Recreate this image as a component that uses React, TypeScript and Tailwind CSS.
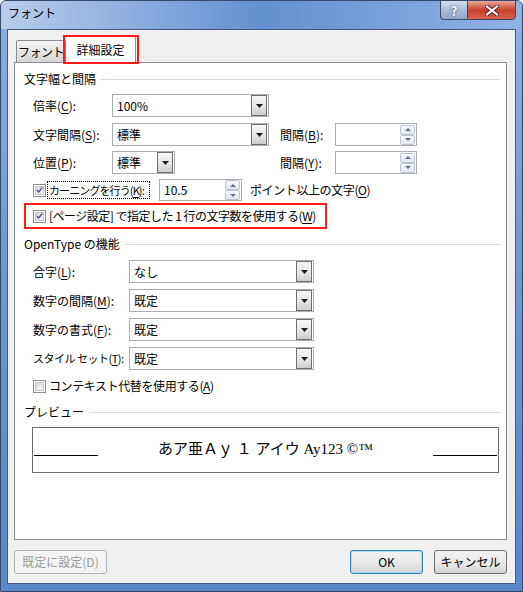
import React from "react";

const ui = "font-['Noto_Sans_CJK_JP','Noto_Sans',sans-serif]";

function Key({ c }: { c: string }) {
    return <span className="underline underline-offset-[2px]">{c}</span>;
}

function Arrow() {
    return (
        <svg width="7" height="4" viewBox="0 0 7 4">
            <path d="M0 0h7L3.5 4z" fill="#1c1c1c" />
        </svg>
    );
}

function Combo({ value, className }: { value: string; className: string }) {
    return (
        <div className={"flex h-[23px] shrink-0 items-center border border-[#abadb3] bg-white " + className}>
            <span className="whitespace-nowrap pl-[4px] text-[12px] leading-none">{value}</span>
            <div className="ml-auto mr-px flex h-[21px] w-[16px] items-center justify-center border border-[#707070] bg-gradient-to-b from-[#f6f6f6] via-[#e8e8e8] to-[#cdcdcd]">
                <Arrow />
            </div>
        </div>
    );
}

function SpinBtn({ up }: { up?: boolean }) {
    return (
        <div className="flex h-[10px] w-[15px] items-center justify-center rounded-[2px] border border-[#b9c3d1] bg-gradient-to-b from-[#f7f9fb] to-[#e2e8ef]">
            <svg width="6" height="3" viewBox="0 0 6 3">
                <path d={up ? "M0 3h6L3 0z" : "M0 0h6L3 3z"} fill="#5a6d96" />
            </svg>
        </div>
    );
}

function Spin({ value, className }: { value?: string; className: string }) {
    return (
        <div className={"flex shrink-0 items-center border border-[#abadb3] bg-white " + className}>
            <span className="pl-[4px] text-[12px] leading-none">{value}</span>
            <div className="ml-auto mr-px flex flex-col">
                <SpinBtn up />
                <SpinBtn />
            </div>
        </div>
    );
}

function Check({ checked }: { checked?: boolean }) {
    return (
        <div className="flex h-[13px] w-[13px] shrink-0 items-center justify-center border border-[#8e8f8f] bg-white p-px">
            <div className="flex h-full w-full items-center justify-center border border-[#c6c6c6] bg-gradient-to-br from-[#d8d8d8] to-[#f8f8f8]">
                {checked && (
                    <svg width="9" height="8" viewBox="0 0 9 8">
                        <path d="M1 4l2.5 2.5L8 1" stroke="#3d5391" strokeWidth="1.8" fill="none" />
                    </svg>
                )}
            </div>
        </div>
    );
}

function Header({ title }: { title: string }) {
    return (
        <div className="flex h-[16px] items-center pl-[9px] pr-[6px]">
            <span className="whitespace-nowrap text-[12px] leading-none">{title}</span>
            <div className="ml-[5px] h-px flex-1 bg-[#d5dfe5]" />
        </div>
    );
}

export default function App() {
    return (
        <div className={"flex h-[592px] w-[523px] flex-col overflow-hidden rounded-t-[6px] border border-[#34496a] bg-gradient-to-b from-[#8db0e2] via-[#6b96d2] to-[#5a87c8] text-black " + ui}>
            {/* Title bar */}
            <div className="flex h-[28px] shrink-0 items-start justify-between bg-gradient-to-r from-[#b7cdec] via-[#6390d0] to-[#90b3e3] pl-[7px] pr-[6px]">
                <span className="pt-[6px] text-[12px] leading-none">フォント</span>
                <div className="-mt-px flex h-[20px]">
                    <div className="flex w-[27px] items-center justify-center rounded-bl-[4px] border border-r-0 border-[#3b4a61] bg-gradient-to-b from-[#d3deed] via-[#a9bcd8] to-[#8ea6c9] text-[13px] font-bold leading-none text-white [text-shadow:0_0_2px_#28364d]">
                        ?
                    </div>
                    <div className="flex w-[49px] items-center justify-center rounded-br-[4px] border border-[#3b4a61] bg-gradient-to-b from-[#e9a898] via-[#c7402d] to-[#d7604a]">
                        <svg width="14" height="11" viewBox="0 0 14 11">
                            <path d="M2 1.5L12 9.5M12 1.5L2 9.5" stroke="#5a1a12" strokeWidth="4" strokeLinecap="square" />
                            <path d="M2 1.5L12 9.5M12 1.5L2 9.5" stroke="#ffffff" strokeWidth="2.2" strokeLinecap="square" />
                        </svg>
                    </div>
                </div>
            </div>

            {/* Client area */}
            <div className="mx-[6px] flex h-[555px] shrink-0 flex-col border border-[#3f5a84] bg-[#f0f0f0]">
                {/* Tabs */}
                <div className="flex h-[32px] shrink-0 items-end pl-[8px]">
                    <div className="flex h-[22px] w-[50px] items-center justify-center whitespace-nowrap rounded-t-[2px] border border-b-0 border-[#898c95] bg-gradient-to-b from-[#f3f3f3] to-[#d6d6d6] text-[12px] leading-none tracking-[-0.5px]">
                        フォント
                    </div>
                    <div className="relative z-10 -mb-px flex h-[27px] w-[70px] items-center justify-center whitespace-nowrap rounded-t-[2px] border border-b-0 border-l-0 border-[#898c95] bg-white text-[12px] leading-none">
                        詳細設定
                        <div className="absolute -left-[3px] -top-[2px] h-[29px] w-[76px] border-2 border-[#ff1a1a]" />
                    </div>
                </div>

                {/* Panel */}
                <div className="ml-[6px] mr-[8px] flex h-[478px] shrink-0 flex-col whitespace-nowrap border border-[#898c95] bg-white text-[12px] leading-none">
                    <div className="mt-[8px]">
                        <Header title="文字幅と間隔" />
                    </div>

                    <div className="mt-[7px] flex h-[23px] items-center pl-[18px]">
                        <span className="w-[79px] shrink-0">倍率(<Key c="C" />):</span>
                        <Combo value="100%" className="w-[157px]" />
                    </div>

                    <div className="mt-[6px] flex h-[23px] items-center pl-[18px]">
                        <span className="w-[79px] shrink-0">文字間隔(<Key c="S" />):</span>
                        <Combo value="標準" className="w-[157px]" />
                        <span className="ml-[11px] w-[55px] shrink-0">間隔(<Key c="B" />):</span>
                        <Spin className="h-[23px] w-[82px]" />
                    </div>

                    <div className="mt-[5px] flex h-[23px] items-center pl-[18px]">
                        <span className="w-[79px] shrink-0">位置(<Key c="P" />):</span>
                        <Combo value="標準" className="w-[63px]" />
                        <span className="ml-[105px] w-[55px] shrink-0">間隔(<Key c="Y" />):</span>
                        <Spin className="h-[23px] w-[82px]" />
                    </div>

                    <div className="mt-[5px] flex h-[22px] items-center pl-[18px]">
                        <Check checked />
                        <span className="ml-[1px] flex h-[18px] w-[103px] shrink-0 items-center overflow-hidden border border-dotted border-black pl-[1px] text-[11px] tracking-[-0.9px]">
                            カーニングを行う(<Key c="K" />):
                        </span>
                        <Spin value="10.5" className="ml-[9px] h-[22px] w-[83px]" />
                        <span className="ml-[8px] tracking-[-0.4px]">ポイント以上の文字(<Key c="O" />)</span>
                    </div>

                    <div className="ml-[9px] mt-[2px] flex h-[26px] w-[303px] items-center border-2 border-[#ff1a1a] pl-[7px]">
                        <Check checked />
                        <span className="ml-[3px] tracking-[-0.5px]">[ページ設定] で指定した 1 行の文字数を使用する(<Key c="W" />)</span>
                    </div>

                    <div className="mt-[7px]">
                        <Header title="OpenType の機能" />
                    </div>

                    <div className="mt-[8px] flex h-[23px] items-center pl-[18px]">
                        <span className="w-[96px] shrink-0">合字(<Key c="L" />):</span>
                        <Combo value="なし" className="w-[185px]" />
                    </div>
                    <div className="mt-[6px] flex h-[23px] items-center pl-[18px]">
                        <span className="w-[96px] shrink-0">数字の間隔(<Key c="M" />):</span>
                        <Combo value="既定" className="w-[185px]" />
                    </div>
                    <div className="mt-[6px] flex h-[23px] items-center pl-[18px]">
                        <span className="w-[96px] shrink-0">数字の書式(<Key c="F" />):</span>
                        <Combo value="既定" className="w-[185px]" />
                    </div>
                    <div className="mt-[6px] flex h-[23px] items-center pl-[18px]">
                        <span className="w-[96px] shrink-0 text-[11px] tracking-[-0.5px]">スタイル セット(<Key c="T" />):</span>
                        <Combo value="既定" className="w-[185px]" />
                    </div>

                    <div className="mt-[8px] flex h-[16px] items-center pl-[18px]">
                        <Check />
                        <span className="ml-[3px] tracking-[-0.4px]">コンテキスト代替を使用する(<Key c="A" />)</span>
                    </div>

                    <div className="mt-[10px]">
                        <Header title="プレビュー" />
                    </div>

                    <div className="ml-[17px] mt-[7px] flex h-[46px] w-[467px] border border-[#6d6d6d] px-px">
                        <div className="h-[28px] w-[64px] shrink-0 border-b border-black" />
                        <div className="flex-1 pt-[12px] text-center font-['Liberation_Serif','Noto_Sans_CJK_JP',serif] text-[15px] leading-[18px]">
                            あア亜Ａｙ １ アイウ Ay123 ©™
                        </div>
                        <div className="h-[28px] w-[64px] shrink-0 border-b border-black" />
                    </div>
                </div>

                {/* Buttons */}
                <div className="ml-[6px] mr-[8px] mt-[10px] flex h-[24px] shrink-0 items-stretch whitespace-nowrap text-[12px] leading-none">
                    <div className="flex w-[93px] items-center justify-center rounded-[3px] border border-[#adb2b5] bg-[#f4f4f4] text-[#9a9a9a]">
                        既定に設定(D)
                    </div>
                    <div className="ml-auto flex w-[73px] items-center justify-center rounded-[3px] border border-[#3c7fb1] bg-gradient-to-b from-[#f2f2f2] via-[#ebebeb] to-[#d4d4d4] shadow-[inset_0_0_0_1px_#a5ddf6]">
                        OK
                    </div>
                    <div className="ml-[11px] flex w-[73px] items-center justify-center rounded-[3px] border border-[#707070] bg-gradient-to-b from-[#f2f2f2] via-[#ebebeb] to-[#d4d4d4]">
                        キャンセル
                    </div>
                </div>
            </div>
        </div>
    );
}
